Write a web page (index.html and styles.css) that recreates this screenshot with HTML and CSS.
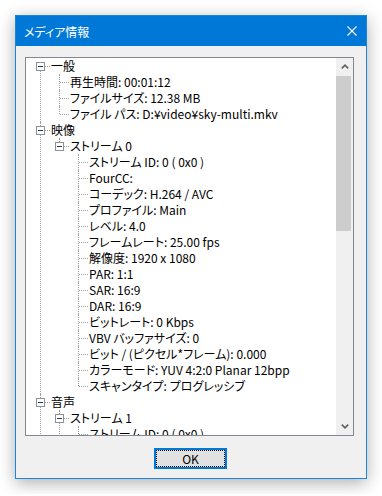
FILE: index.html
```html
<!DOCTYPE html>
<html lang="ja">

<head>
    <meta charset="UTF-8">
    <meta name="viewport" content="width=device-width, initial-scale=1.0">
    <title>メディア情報</title>
    <link rel="stylesheet" href="styles.css">
</head>

<body>
    <div class="dialog">
        <header class="titlebar">
            <span class="title">メディア情報</span>
            <span class="close">
                <svg width="10" height="10" viewBox="0 0 10 10"><path d="M0.5 0.5 L9.5 9.5 M9.5 0.5 L0.5 9.5" stroke="#fff" stroke-width="1.1" fill="none"/></svg>
            </span>
        </header>
        <div class="content">
            <div class="listbox">
                <div class="tree-view">
                    <ul class="tree">
                        <li>
                            <div class="row"><span class="toggle"></span>一般</div>
                            <ul>
                                <li><div class="row">再生時間: 00:01:12</div></li>
                                <li><div class="row">ファイルサイズ: 12.38 MB</div></li>
                                <li><div class="row">ファイル パス: D:¥video¥sky-multi.mkv</div></li>
                            </ul>
                        </li>
                        <li>
                            <div class="row"><span class="toggle"></span>映像</div>
                            <ul>
                                <li>
                                    <div class="row"><span class="toggle"></span>ストリーム 0</div>
                                    <ul>
                                        <li><div class="row">ストリーム ID: 0 ( 0x0 )</div></li>
                                        <li><div class="row">FourCC:</div></li>
                                        <li><div class="row">コーデック: H.264 / AVC</div></li>
                                        <li><div class="row">プロファイル: Main</div></li>
                                        <li><div class="row">レベル: 4.0</div></li>
                                        <li><div class="row">フレームレート: 25.00 fps</div></li>
                                        <li><div class="row">解像度: 1920 x 1080</div></li>
                                        <li><div class="row">PAR: 1:1</div></li>
                                        <li><div class="row">SAR: 16:9</div></li>
                                        <li><div class="row">DAR: 16:9</div></li>
                                        <li><div class="row">ビットレート: 0 Kbps</div></li>
                                        <li><div class="row">VBV バッファサイズ: 0</div></li>
                                        <li><div class="row">ビット / (ピクセル*フレーム): 0.000</div></li>
                                        <li><div class="row">カラーモード: YUV 4:2:0 Planar 12bpp</div></li>
                                        <li><div class="row">スキャンタイプ: プログレッシブ</div></li>
                                    </ul>
                                </li>
                            </ul>
                        </li>
                        <li>
                            <div class="row"><span class="toggle"></span>音声</div>
                            <ul>
                                <li>
                                    <div class="row"><span class="toggle"></span>ストリーム 1</div>
                                    <ul>
                                        <li><div class="row">ストリーム ID: 0 ( 0x0 )</div></li>
                                        <li><div class="row">コーデック: AAC</div></li>
                                        <li><div class="row">サンプリングレート: 48000 Hz</div></li>
                                        <li><div class="row">チャンネル: 2</div></li>
                                        <li><div class="row">ビットレート: 0 Kbps</div></li>
                                    </ul>
                                </li>
                                <li>
                                    <div class="row"><span class="toggle"></span>ストリーム 2</div>
                                    <ul>
                                        <li><div class="row">ストリーム ID: 1 ( 0x1 )</div></li>
                                        <li><div class="row">コーデック: AAC</div></li>
                                    </ul>
                                </li>
                            </ul>
                        </li>
                        <li>
                            <div class="row"><span class="toggle"></span>字幕</div>
                            <ul>
                                <li><div class="row">ストリーム数: 0</div></li>
                            </ul>
                        </li>
                    </ul>
                </div>
                <div class="scrollbar">
                    <span class="sb-btn">
                        <svg width="8" height="5" viewBox="0 0 8 5"><path d="M0.8 4.4 L4 1.2 L7.2 4.4" stroke="#606060" stroke-width="1.6" fill="none"/></svg>
                    </span>
                    <span class="sb-track"><span class="sb-thumb"></span></span>
                    <span class="sb-btn">
                        <svg width="8" height="5" viewBox="0 0 8 5"><path d="M0.8 0.6 L4 3.8 L7.2 0.6" stroke="#606060" stroke-width="1.6" fill="none"/></svg>
                    </span>
                </div>
            </div>
            <div class="buttons">
                <button class="btn-ok">OK</button>
            </div>
        </div>
    </div>
</body>

</html>
```

FILE: styles.css
```css
html,
body {
    margin: 0;
    background: #fff;
}

body {
    padding: 15px;
    font-family: "Noto Sans CJK JP", sans-serif;
    font-size: 12px;
    font-feature-settings: "palt";
}

.dialog {
    width: 352px;
    height: 464px;
    box-sizing: border-box;
    border: 1px solid #1c86dc;
    background: #f0f0f0;
    display: flex;
    flex-direction: column;
    box-shadow: 0 4px 16px rgba(0, 0, 0, 0.32);
}

.titlebar {
    height: 30px;
    flex: none;
    background: #0078d7;
    color: #fff;
    display: flex;
    align-items: center;
    justify-content: space-between;
    padding-left: 8px;
}

.close {
    width: 28px;
    height: 30px;
    display: flex;
    align-items: center;
    justify-content: center;
}

.content {
    flex: 1;
    padding: 11px 12px 9px 9px;
    display: flex;
    flex-direction: column;
}

.listbox {
    height: 379px;
    box-sizing: border-box;
    border: 1px solid #828790;
    background: #fff;
    display: flex;
}

.tree-view {
    flex: 1;
    overflow: hidden;
    white-space: nowrap;
    color: #000;
}

/* tree */
.tree,
.tree ul {
    list-style: none;
    margin: 0;
    padding: 0;
}

.tree ul {
    margin-left: -6px;
}

.tree li {
    position: relative;
    padding-left: 25px;
}

.row {
    height: 16px;
    line-height: 16px;
}

.tree li::before {
    content: "";
    position: absolute;
    left: 14px;
    top: 0;
    bottom: 0;
    border-left: 1px dotted #a0a0a0;
}

.tree > li:first-child::before {
    top: 8px;
}

.tree li:last-child::before {
    bottom: auto;
    height: 8px;
}

.tree li::after {
    content: "";
    position: absolute;
    left: 15px;
    top: 8px;
    width: 9px;
    border-top: 1px dotted #a0a0a0;
}

.toggle {
    position: absolute;
    z-index: 1;
    left: 10px;
    top: 4px;
    width: 9px;
    height: 9px;
    box-sizing: border-box;
    border: 1px solid #919191;
    background: #fff;
}

.toggle::before {
    content: "";
    position: absolute;
    left: 1px;
    top: 3px;
    width: 5px;
    height: 1px;
    background: #1f3a7a;
}

/* scrollbar */
.scrollbar {
    width: 17px;
    flex: none;
    background: #f0f0f0;
    display: flex;
    flex-direction: column;
}

.sb-btn {
    height: 17px;
    display: flex;
    align-items: center;
    justify-content: center;
}

.sb-track {
    flex: 1;
}

.sb-thumb {
    display: block;
    height: 155px;
    margin: 1px 2px 0 0;
    background: #cdcdcd;
}

/* buttons */
.buttons {
    margin-top: 12px;
    padding-left: 2px;
    display: flex;
    justify-content: center;
}

.btn-ok {
    width: 73px;
    height: 21px;
    padding: 0;
    border: 2px solid #0078d7;
    background: #e1e1e1;
    font-family: inherit;
    font-size: 12px;
    color: #000;
    outline: 1px dotted #000;
    outline-offset: -3px;
}
```
